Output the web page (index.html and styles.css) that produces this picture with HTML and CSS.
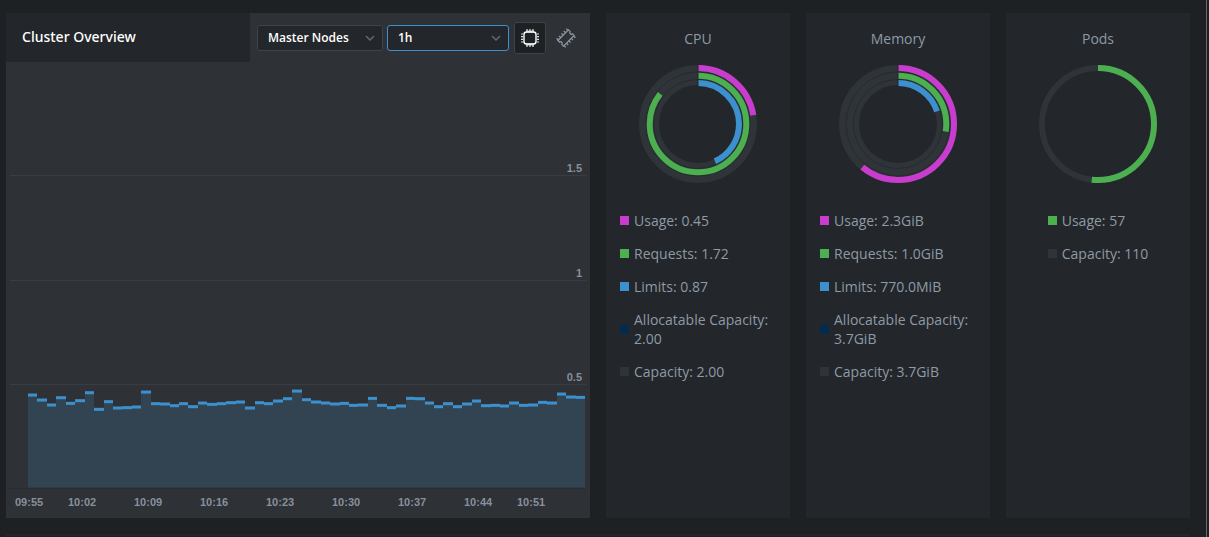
FILE: index.html
```html
<!DOCTYPE html>
<html lang="en">
<head>
<meta charset="utf-8">
<meta name="viewport" content="width=device-width, initial-scale=1">
<title>Cluster Overview</title>
<link rel="stylesheet" href="styles.css">
</head>
<body>
<div class="page">
  <main class="overview">
    <section class="metrics">
      <header class="metrics-header">
        <h1 class="metrics-title">Cluster Overview</h1>
        <div class="controls">
          <div class="select select-role">
            <select aria-label="Node role"><option>Master Nodes</option><option>Worker Nodes</option></select>
            <svg class="chevron" viewBox="0 0 10 6" aria-hidden="true"><path d="M1 1l4 4 4-4"/></svg>
          </div>
          <div class="select select-range focused">
            <select aria-label="Time range"><option>1h</option><option>3h</option><option>6h</option></select>
            <svg class="chevron" viewBox="0 0 10 6" aria-hidden="true"><path d="M1 1l4 4 4-4"/></svg>
          </div>
          <button class="icon-button active" type="button" aria-label="CPU" aria-pressed="true">
            <svg class="icon" viewBox="0 0 20 20" aria-hidden="true">
              <path class="pin-base" d="M6 3.5h8M6 16.5h8"/>
              <rect class="chip" x="4" y="4" width="12" height="12" rx="2.5"/>
              <path class="pins" d="M7 1v2M10 1v2M13 1v2M7 17v2M10 17v2M13 17v2M1 6h2M1 8.700h2M1 11.300h2M1 14h2M17 6h2M17 8.700h2M17 11.300h2M17 14h2"/>
            </svg>
          </button>
          <button class="icon-button" type="button" aria-label="Memory" aria-pressed="false">
            <svg class="icon" viewBox="0 0 20 20" aria-hidden="true">
              <g transform="rotate(-45 10 10)">
                <path class="module" d="M2.500 6h15v2.500a1.500 1.500 0 0 0 0 3v2.500h-15v-2.500a1.500 1.500 0 0 0 0-3z"/>
                <path class="legs" d="M3.200 3.500v2.500M6.600 3.500v2.500M10 3.500v2.500M13.400 3.500v2.500M16.800 3.500v2.500M3.200 14v2.500M6.600 14v2.500M10 14v2.500M13.400 14v2.500M16.800 14v2.500"/>
              </g>
            </svg>
          </button>
        </div>
      </header>
      <div class="plot">
        <div class="band"><span>1.5</span></div>
        <div class="band"><span>1</span></div>
        <div class="band"><span>0.5</span></div>
        <div class="band"></div>
        <svg class="bars" viewBox="0 0 557 120" preserveAspectRatio="none" role="img" aria-label="CPU usage over the last hour"></svg>
      </div>
      <div class="times">
        <span>09:55</span><span>10:02</span><span>10:09</span><span>10:16</span><span>10:23</span><span>10:30</span><span>10:37</span><span>10:44</span><span>10:51</span>
      </div>
    </section>

    <section class="card">
      <h2 class="card-title">CPU</h2>
      <svg class="donut" viewBox="0 0 120 120" role="img" aria-label="CPU rings">
        <g transform="rotate(-90 60 60)">
          <circle class="track" cx="60" cy="60" r="49"/>
          <circle class="divider" cx="60" cy="60" r="52"/><circle class="divider" cx="60" cy="60" r="44.500"/>
          <circle class="ring usage" cx="60" cy="60" r="56" pathLength="100" stroke-dasharray="22.5 100"/>
          <circle class="ring requests" cx="60" cy="60" r="48.300" pathLength="100" stroke-dasharray="85.7 100"/>
          <circle class="ring limits" cx="60" cy="60" r="41" pathLength="100" stroke-dasharray="43.2 100"/>
          <path class="start" d="M98 60h21"/>
        </g>
      </svg>
      <ul class="legend">
        <li><i class="swatch usage"></i><span>Usage: 0.45</span></li>
        <li><i class="swatch requests"></i><span>Requests: 1.72</span></li>
        <li><i class="swatch limits"></i><span>Limits: 0.87</span></li>
        <li><i class="swatch allocatable"></i><span>Allocatable Capacity: 2.00</span></li>
        <li><i class="swatch capacity"></i><span>Capacity: 2.00</span></li>
      </ul>
    </section>

    <section class="card">
      <h2 class="card-title">Memory</h2>
      <svg class="donut" viewBox="0 0 120 120" role="img" aria-label="Memory rings">
        <g transform="rotate(-90 60 60)">
          <circle class="track" cx="60" cy="60" r="49"/>
          <circle class="divider" cx="60" cy="60" r="52"/><circle class="divider" cx="60" cy="60" r="44.500"/>
          <circle class="ring usage" cx="60" cy="60" r="56" pathLength="100" stroke-dasharray="61 100"/>
          <circle class="ring requests" cx="60" cy="60" r="48.300" pathLength="100" stroke-dasharray="27.5 100"/>
          <circle class="ring limits" cx="60" cy="60" r="41" pathLength="100" stroke-dasharray="20 100"/>
          <path class="start" d="M98 60h21"/>
        </g>
      </svg>
      <ul class="legend">
        <li><i class="swatch usage"></i><span>Usage: 2.3GiB</span></li>
        <li><i class="swatch requests"></i><span>Requests: 1.0GiB</span></li>
        <li><i class="swatch limits"></i><span>Limits: 770.0MiB</span></li>
        <li><i class="swatch allocatable"></i><span>Allocatable Capacity: 3.7GiB</span></li>
        <li><i class="swatch capacity"></i><span>Capacity: 3.7GiB</span></li>
      </ul>
    </section>

    <section class="card">
      <h2 class="card-title">Pods</h2>
      <svg class="donut" viewBox="0 0 120 120" role="img" aria-label="Pods ring">
        <g transform="rotate(-90 60 60)">
          <circle class="track single" cx="60" cy="60" r="56"/>
          <circle class="ring requests" cx="60" cy="60" r="56" pathLength="100" stroke-dasharray="51.8 100"/>
        </g>
      </svg>
      <ul class="legend">
        <li><i class="swatch requests"></i><span>Usage: 57</span></li>
        <li><i class="swatch capacity"></i><span>Capacity: 110</span></li>
      </ul>
    </section>
  </main>
  <div class="next-panel"></div>
</div>
<script src="chart.js"></script>
</body>
</html>
```
FILE: styles.css
```css
* { box-sizing: border-box; }

body {
  margin: 0;
  background: #1e2124;
  color: #8e9aa6;
  font: 14px/19px "Open Sans", "Noto Sans", sans-serif;
}

.page {
  display: flex;
  flex-direction: column;
  min-height: 100vh;
  margin-right: 2px;
  border-right: 1px solid #6a6a6a;
  background: #1e2124;
}

.overview {
  flex: 1;
  display: grid;
  grid-template-columns: 584fr 184fr 184fr 184fr;
  gap: 16px;
  padding: 13px 16px 16px 6px;
}

.next-panel {
  height: 3px;
  margin: 0 16px 0 6px;
  background: #24252b;
  border-bottom: 1px solid #231c28;
}

.metrics {
  display: flex;
  flex-direction: column;
  min-width: 0;
  background: #2e3136;
}

.metrics-header {
  display: flex;
  height: 49px;
}

.metrics-title {
  flex: 1;
  margin: 0;
  padding: 14px 16px;
  background: #23262a;
  color: #fff;
  font-family: "Noto Sans", "Open Sans", sans-serif;
  font-size: 14px;
  font-weight: 500;
  white-space: nowrap;
}

.controls {
  display: flex;
  align-items: center;
  padding: 0 8px 0 7px;
}

.select {
  position: relative;
  height: 26px;
  margin-right: 4px;
}

.select-role { width: 126px; }
.select-range { width: 122px; margin-right: 5px; }

.select select {
  appearance: none;
  width: 100%;
  height: 100%;
  padding: 0 24px 0 10px;
  border: 1px solid #3f4347;
  border-radius: 3px;
  outline: none;
  background: #23262a;
  color: #fff;
  font: 600 12px/19px "Open Sans", "Noto Sans", sans-serif;
}

.select.focused select { border-color: #3d90ce; }

.chevron {
  position: absolute;
  top: 10px;
  right: 8px;
  width: 10px;
  height: 6px;
  fill: none;
  stroke: #64686d;
  stroke-width: 1.5;
  pointer-events: none;
}

.icon-button {
  display: flex;
  align-items: center;
  justify-content: center;
  width: 32px;
  height: 32px;
  margin-right: 4px;
  padding: 0;
  border: 1px solid transparent;
  border-radius: 3px;
  background: none;
  color: #8e9aa6;
}

.icon-button:last-child { margin-right: 0; }

.icon-button.active {
  border-color: #3f4347;
  background: #1e2124;
  color: #fff;
}

.icon {
  width: 20px;
  height: 20px;
  fill: none;
  stroke: currentColor;
}

.chip { stroke-width: 1.4; }
.pin-base { stroke-width: 2; opacity: 0.6; }
.pins { stroke-width: 1.2; opacity: 0.85; }
.module { stroke-width: 1.2; }
.legs { stroke-width: 1.2; }

.plot {
  position: relative;
  flex: 1;
  display: grid;
  grid-template-rows: 114fr 105fr 104fr 104fr;
  margin: 0 4px;
}

.band {
  display: flex;
  align-items: flex-end;
  justify-content: flex-end;
  padding-right: 4px;
  border-bottom: 1px solid #393c41;
}

.band:nth-of-type(4) { border-color: #292b2f; }

.band span,
.times span {
  color: #87909c;
  font: bold 11px/13px "Liberation Sans", Arial, sans-serif;
}

.bars {
  position: absolute;
  right: 1px;
  bottom: 1px;
  width: calc(100% - 19px);
  height: 28%;
}

.bar-area { fill: #324452; }
.bar-cap { fill: #3d90ce; }

.times {
  display: grid;
  grid-template-columns: 53fr 66fr 66fr 66fr 66fr 66fr 66fr 53fr 73fr;
  padding: 7px 0 9px 9px;
}

.card {
  display: flex;
  flex-direction: column;
  align-items: center;
  min-width: 0;
  padding: 16px 14px;
  background: #23262a;
}

.card-title {
  margin: 0 0 16px;
  font-size: 14px;
  font-weight: 400;
}

.donut {
  width: 120px;
  height: 120px;
  margin-bottom: 27px;
  fill: none;
}

.track { stroke: #2f3438; stroke-width: 20; }
.track.single { stroke-width: 6; }
.divider { stroke: #272a2f; stroke-width: 1; }
.ring { stroke-width: 6; }
.ring.usage { stroke: #c93dce; }
.ring.requests { stroke: #4caf50; }
.ring.limits { stroke: #3d90ce; }
.start { stroke: #23262a; stroke-width: 1; }

.legend {
  margin: 0;
  padding: 0;
  list-style: none;
}

.legend li {
  display: flex;
  align-items: center;
  gap: 5px;
  margin-bottom: 14px;
}

.swatch {
  flex: none;
  width: 9px;
  height: 9px;
}

.swatch.usage { background: #c93dce; }
.swatch.requests { background: #4caf50; }
.swatch.limits { background: #3d90ce; }
.swatch.allocatable { background: #032b4d; }
.swatch.capacity { background: #2f3438; }
```
FILE: chart.js
```js
// Top of each one-minute bar, in thirds of a chart unit below the plot's top edge.
const tops = [
  74, 89, 104, 82, 99, 91, 67, 117, 94, 113, 112, 110, 65, 100, 101, 106, 100, 109, 98, 102,
  100, 97, 95, 113, 97, 100, 92, 85, 62, 88, 95, 98, 101, 99, 105, 104, 84, 105, 112, 107,
  84, 85, 98, 109, 100, 109, 101, 92, 106, 105, 107, 98, 105, 104, 96, 98, 71, 80, 81
];
const svg = document.querySelector('.bars');
const step = 557 / tops.length;

function addRect(name, x, y, width, height) {
  const rect = document.createElementNS('http://www.w3.org/2000/svg', 'rect');
  rect.setAttribute('class', name);
  rect.setAttribute('x', x);
  rect.setAttribute('y', y);
  rect.setAttribute('width', width);
  rect.setAttribute('height', height);
  svg.appendChild(rect);
}

tops.forEach((top, i) => {
  const x = Math.round(i * step);
  const width = Math.round((i + 1) * step) - x;
  const y = top / 3 + 1;
  addRect('bar-area', x, y, width, 120 - y);
  addRect('bar-cap', x, y, width, 3);
});
```
